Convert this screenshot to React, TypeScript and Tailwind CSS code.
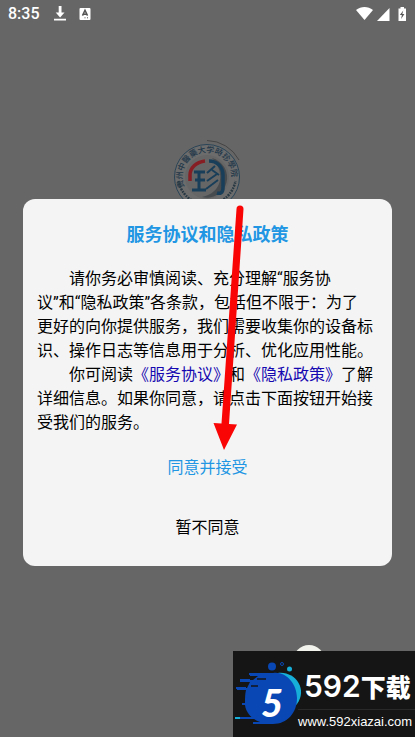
import React from "react";

function StatusBar() {
  return (
    <header className="flex h-7 items-center justify-between px-2 text-white">
      <div className="flex items-center">
        <span className="w-11 font-[Roboto,sans-serif] text-base leading-7 font-medium">8:35</span>
        <svg className="h-4 w-4" viewBox="0 0 16 16" fill="currentColor" aria-label="Download">
          <path d="M6.700 0h2.800v6.500h3L8.100 11.500 3.700 6.500h3zM2 12.800h12v1.700H2z" />
        </svg>
        <svg className="ml-2 h-4 w-4" viewBox="0 0 16 16" aria-label="Keyboard">
          <rect x="3.500" y="2" width="11" height="12" rx="1" fill="#fff" />
          <path d="M6.500 9.600 9 4.200l2.500 5.400M7.300 8.200h3.400" fill="none" stroke="#555" strokeWidth="1.500" />
          <path d="M8.500 11.800h1M11 11.800h1" stroke="#555" strokeWidth="1" />
        </svg>
      </div>
      <svg className="h-5 w-13" viewBox="0 0 52 20" aria-label="Wi-Fi, signal and battery">
        <path d="M1 6C6 2 13 2 18 6L9.500 16z" fill="#fff" />
        <path d="M34.500 4V17H22z" fill="#fff" />
        <path d="M45.500 3h3.500V4.500h2V17h-7.500V4.500h2z" fill="#fff" />
        <path d="m48.300 6.500-3.500 4.500h2.100l-.8 4 3.300-5h-2.100z" fill="#555" />
      </svg>
    </header>
  );
}

function SchoolEmblem() {
  return (
    <svg className="h-20 w-20" viewBox="1 1 80 80" aria-label="School emblem">
      <defs>
        <path id="ring" d="M18.500 53A24.600 24.600 0 1 1 61.500 53" />
      </defs>
      <circle cx="40" cy="41" r="32.500" fill="#6c6c6c" stroke="#294457" strokeWidth="1" />
      <path d="M40 4.500A37 37 0 0 1 72 24" fill="none" stroke="#444" strokeWidth="1" />
      <circle cx="40" cy="41" r="22" fill="#666" />
      <path d="M45 22a20 20 0 1 1-10 39c20-4 24-24 10-39" fill="#484b4e" />
      <text className="font-[Noto_Sans_CJK_SC,sans-serif] text-[8px] font-medium" fill="#203648">
        <textPath href="#ring" startOffset="2">贵州中醫藥大学時珍學院</textPath>
      </text>
      <path d="M11.500 45A29 29 0 0 0 68.500 45" fill="none" stroke="#293943" strokeWidth="2.500" strokeDasharray="1.500 1 2 1" />
      <path d="M23 45v-6c0-7 6-13 15-14" fill="none" stroke="#861e24" strokeWidth="3.500" />
      <path d="M27 36h11M32 36v18M28 44h10M25 54h14" fill="none" stroke="#193e59" strokeWidth="3" />
      <path d="M42 25c8 0 14 6 14 14v13c0 5-3 6-6 5" fill="none" stroke="#193e59" strokeWidth="3.500" />
      <path d="m48 30-8 7M45 34l7 5M50 38l-10 7M51 44l-12 9" fill="none" stroke="#193e59" strokeWidth="2" />
    </svg>
  );
}

function AgreementDialog() {
  return (
    <section
      role="dialog"
      aria-labelledby="agreement-title"
      className="flex w-full flex-col items-center rounded-xl bg-[#f4f4f4] px-3.5 pt-6 pb-[25px]"
    >
      <h1 id="agreement-title" className="text-lg leading-6 font-bold text-[#2196e3]">
        服务协议和隐私政策
      </h1>
      <div className="mt-5 w-full text-base leading-6 text-black">
        <p className="indent-8">
          请你务必审慎阅读、充分理解“服务协
          <br />
          议”和“隐私政策”各条款，包括但不限于：为了
          <br />
          更好的向你提供服务，我们需要收集你的设备标识、操作日志等信息用于分析、优化应用性能。
        </p>
        <p className="indent-8">
          你可阅读
          <a href="#service" className="text-[#1508b0]">《服务协议》</a>
          和
          <a href="#privacy" className="text-[#1508b0]">《隐私政策》</a>
          了解详细信息。如果你同意，请点击下面按钮开始接受我们的服务。
        </p>
      </div>
      <button type="button" className="mt-5 px-4 leading-[26px] text-[#2196e3]">同意并接受</button>
      <button type="button" className="mt-[34px] px-4 leading-[26px] text-black">暂不同意</button>
    </section>
  );
}

function Watermark() {
  return (
    <aside className="absolute right-0 bottom-0 flex h-[86px] w-[182px] bg-[#151515] text-white">
      <svg className="h-full w-[65px] shrink-0 overflow-visible" viewBox="0 0 65 86" aria-hidden="true">
        <path d="M45 22C62 20 75 38 64 53L55 62z" fill="#16afd9" />
        <path d="M17 22h23C53 20 64 33 64 47 64 62 54 73 40 73H21v-2h6c-8-3-14-9-15-17H9v-2h3c0-5 0-9 1-13H4v-2h10l3-6H7v-2h13l5-4h-8z" fill="#0947b4" />
        <path d="M16 23h25M7 29h10M3 37h10M2 67h24M20 72h16" stroke="#0947b4" strokeWidth="2" />
        <path d="M24 28h9M18 35h7" stroke="#151515" strokeWidth="1.500" />
        <path d="M2 67h5" stroke="#16afd9" strokeWidth="2" />
        <circle cx="39" cy="15.500" r="4" fill="#0947b4" />
        <circle cx="49" cy="13" r="1.500" fill="none" stroke="#0947b4" />
        <circle cx="56.500" cy="18" r="2.500" fill="#16afd9" />
        <text x="28" y="66" className="font-[Lato,sans-serif] text-[38px] font-black italic" fill="#fff">5</text>
      </svg>
      <div className="flex min-w-0 flex-1 flex-col pt-[19px]">
        <strong className="flex items-baseline pl-1.5 leading-8 whitespace-nowrap">
          <span className="font-[Inter,sans-serif] text-[30px] font-semibold">592</span>
          <span className="text-[25px] font-black">下载</span>
        </strong>
        <span className="mt-1 border-t border-[#292929] pt-1 font-[Liberation_Sans,Arial,sans-serif] text-[13px] leading-4">
          www.592xiazai.com
        </span>
      </div>
    </aside>
  );
}

function PointerArrow() {
  return (
    <svg className="pointer-events-none absolute top-51 left-1/2 h-62 w-10" viewBox="0 0 40 248" aria-hidden="true">
      <path d="M28.500 5a3.500 3.500 0 0 1 7 0l-14.500 215 8 .5L16 246 5.500 219l8 .5z" fill="#fa0505" />
    </svg>
  );
}

export default function App() {
  return (
    <div className="relative flex min-h-screen flex-col overflow-hidden bg-[#666] font-[Roboto,'Noto_Sans_CJK_SC',sans-serif]">
      <StatusBar />
      <main className="flex flex-1 flex-col items-center pt-[109px]">
        <SchoolEmblem />
      </main>
      <div className="absolute right-22.5 bottom-15 h-8 w-8 rounded-full bg-[#f3f3ed]" />
      <div className="absolute inset-x-0 top-7 bottom-0 flex items-center justify-center px-[23px]">
        <AgreementDialog />
      </div>
      <PointerArrow />
      <Watermark />
    </div>
  );
}
